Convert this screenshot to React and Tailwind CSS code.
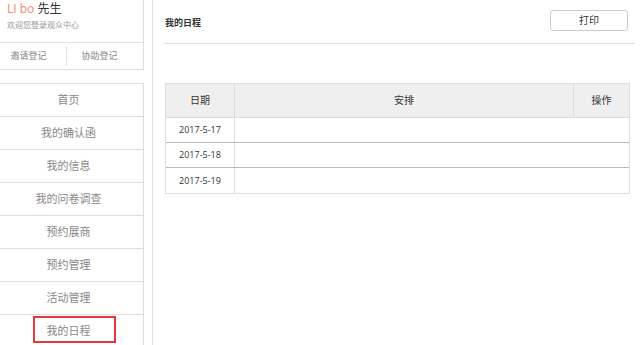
import React from 'react';

const menu = ['首页', '我的确认函', '我的信息', '我的问卷调查', '预约展商', '预约管理', '活动管理', '我的日程'];
const rows = ['2017-5-17', '2017-5-18', '2017-5-19'];

const App = () => {
    return (
        <div className="flex w-[640px] h-[345px] overflow-hidden bg-white text-[#555]" style={{ fontFamily: '"Open Sans", "Noto Sans CJK SC", sans-serif' }}>
            {/* 左侧栏 */}
            <div className="w-[144px] shrink-0">
                <div className="border-r border-b border-[#ddd]">
                    <div className="h-[43px] border-b border-[#e3e3e3] pl-[7px] pt-[1px]">
                        <div className="text-[12px] leading-[16px] text-[#333]">
                            <span className="text-[#f0876f]">LI bo</span> 先生
                        </div>
                        <div className="text-[8px] leading-[14px] text-[#999] mt-[1px]">欢迎您登录观众中心</div>
                    </div>
                    <div className="flex h-[26px] items-center text-[9px] text-[#888]">
                        <div className="w-[67px] pr-[9px] text-center border-r border-dotted border-[#ccc] h-[18px] leading-[18px]">邀请登记</div>
                        <div className="flex-1 pr-[11px] text-center leading-[18px]">协助登记</div>
                    </div>
                </div>
                <div className="mt-[13px] border-t border-r border-[#ddd] relative">
                    {menu.map((m, i) => (
                        <div key={i} className="h-[33px] border-b border-[#ddd] flex items-center justify-center pr-[6px] text-[11px] text-[#888]">
                            {m}
                        </div>
                    ))}
                    {/* 标注框 */}
                    <div className="absolute left-[33px] top-[232px] w-[83px] h-[27px] border-2 border-[#e8373a]"></div>
                </div>
            </div>

            {/* 主内容 */}
            <div className="ml-[8px] flex-1 border-l border-[#e3e3e3] pl-[11px] pr-[5px]">
                <div className="h-[44px] border-b border-[#ddd] flex items-center justify-between pl-[1px] pr-[7px]">
                    <div className="text-[9px] font-bold text-[#333] mt-[2px]">我的日程</div>
                    <div className="w-[78px] h-[21px] mb-[3px] border border-[#ccc] rounded-[3px] flex items-center justify-center text-[10px] text-[#333]">打印</div>
                </div>
                <div className="mt-[39px] w-[465px] ml-[1px] border border-[#ddd]">
                    <div className="flex h-[34px] bg-[#efefef] text-[10px] text-[#333] border-b border-[#ddd]">
                        <div className="w-[69px] border-r border-[#ddd] flex items-center justify-center">日期</div>
                        <div className="flex-1 border-r border-[#ddd] flex items-center justify-center">安排</div>
                        <div className="w-[55px] flex items-center justify-center">操作</div>
                    </div>
                    {rows.map((d, i) => (
                        <div key={i} className={`flex h-[25px] text-[9px] text-[#333] ${i < rows.length - 1 ? 'border-b border-[#bbb]' : ''}`}>
                            <div className="w-[69px] border-r border-[#ddd] flex items-center justify-center">{d}</div>
                            <div className="flex-1"></div>
                        </div>
                    ))}
                </div>
            </div>
        </div>
    );
};

export default App;
